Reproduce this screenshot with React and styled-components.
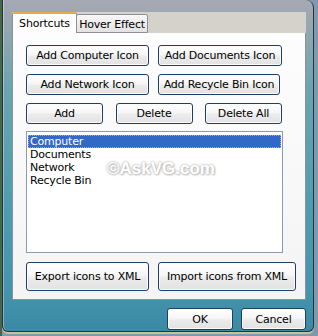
import React from 'react';
import styled, { createGlobalStyle } from 'styled-components';

const GlobalStyle = createGlobalStyle`
	html, body {
		margin: 0;
		padding: 0;
	}
	body {
		width: 318px;
		height: 336px;
		overflow: hidden;
		font-family: "DejaVu Sans", Tahoma, sans-serif;
		font-size: 11px;
		color: #000;
	}
`;

// 바탕화면
const Desktop = styled.div`
	width: 318px;
	height: 336px;
	display: flex;
	align-items: flex-start;
	background: linear-gradient(90deg, #47654a 0, #47654a 2px, #7d9aae 2px);
`;

// Aero 유리 창틀
const Window = styled.div`
	box-sizing: border-box;
	width: 312px;
	height: 332px;
	margin-left: 2px;
	padding: 12px 0 0 9px;
	border: 1px solid #26343e;
	border-top: none;
	border-radius: 0 8px 6px 6px;
	background: linear-gradient(
		to bottom,
		#a5a9b3 0,
		#9ea7af 14px,
		#69a5af 90px,
		#509db0 200px,
		#4494ad 290px,
		#3a8aa5 100%
	);
	box-shadow: inset 1px 0 0 rgba(255, 255, 255, 0.35), 0 2px 0 #c9c19a;
	display: flex;
	flex-direction: column;
`;

const TabStrip = styled.div`
	width: 294px;
	height: 21px;
	display: flex;
	align-items: flex-end;
	background: #d5d2cc;
	margin-bottom: -1px;
	position: relative;
	z-index: 1;
`;

const Tab = styled.div`
	box-sizing: border-box;
	display: flex;
	align-items: center;
	justify-content: center;
	width: ${(p) => p.$w}px;
	height: ${(p) => (p.$active ? 21 : 19)}px;
	margin-left: ${(p) => (p.$active ? 0 : -1)}px;
	border: 1px solid #8e9097;
	border-bottom: ${(p) => (p.$active ? 'none' : '1px solid #8e9097')};
	border-top: ${(p) => (p.$active ? '2px solid #f2a640' : '1px solid #8e9097')};
	background: ${(p) =>
		p.$active ? '#fdfdfd' : 'linear-gradient(#f7f7f7, #e3e3e3)'};
	border-radius: 2px 2px 0 0;
	padding-top: ${(p) => (p.$active ? 0 : 1)}px;
	font-size: 11px;
	letter-spacing: -0.2px;
	white-space: nowrap;
`;

const Panel = styled.div`
	box-sizing: border-box;
	width: 294px;
	height: 268px;
	border: 1px solid #8e9097;
	background: linear-gradient(#fdfdfd, #f4f4f4);
	padding: 12px 0 0 13px;
	display: flex;
	flex-direction: column;
`;

const Button = styled.button`
	box-sizing: border-box;
	width: ${(p) => p.$w}px;
	height: ${(p) => p.$h || 21}px;
	padding: 0;
	border: 1px solid #1f3f66;
	border-radius: 3px;
	background: linear-gradient(#ffffff, #f6f6f6 45%, #ebebeb 55%, #e2e2e2);
	box-shadow: inset 0 0 0 1px #fbfbfb;
	font-family: "DejaVu Sans", Tahoma, sans-serif;
	font-size: 11px;
	letter-spacing: -0.2px;
	color: #000;
	white-space: nowrap;
`;

const ButtonGrid = styled.div`
	display: grid;
	grid-template-columns: 123px 124px;
	column-gap: 9px;
	row-gap: 8px;
`;

const ButtonRow = styled.div`
	display: flex;
	justify-content: space-between;
	width: 256px;
	margin-top: ${(p) => p.$mt}px;
`;

const ListBox = styled.div`
	position: relative;
	box-sizing: border-box;
	width: 257px;
	height: 122px;
	margin-top: 7px;
	padding: 3px 1px;
	border: 1px solid #8a9bb3;
	background: #fff;
	overflow: hidden;
`;

const ListItem = styled.div`
	height: 13px;
	line-height: 13px;
	padding-left: 2px;
	font-size: 11px;
	letter-spacing: -0.2px;
	color: ${(p) => (p.$selected ? '#fff' : '#000')};
	background: ${(p) => (p.$selected ? '#3169c6' : 'transparent')};
	outline: ${(p) => (p.$selected ? '1px dotted #e7a23a' : 'none')};
	outline-offset: -1px;
`;

// 워터마크
const Watermark = styled.div`
	position: absolute;
	left: 80px;
	top: 27px;
	font-family: "Liberation Sans", Arial, sans-serif;
	font-weight: bold;
	font-size: 17px;
	color: #fff;
	text-shadow: 0 0 2px #b8b8b8, 0 0 3px #c8c8c8, 1px 1px 2px #bdbdbd;
`;

const BottomRow = styled.div`
	display: flex;
	gap: 9px;
	margin-top: 9px;
`;

const Footer = styled.div`
	width: 294px;
	display: flex;
	justify-content: flex-end;
	gap: 8px;
	margin-top: 8px;
`;

const items = ['Computer', 'Documents', 'Network', 'Recycle Bin'];

const App = () => {
	return (
		<>
			<GlobalStyle />
			<Desktop>
				<Window>
					<TabStrip>
						<Tab $active $w={65}>
							Shortcuts
						</Tab>
						<Tab $w={72}>Hover Effect</Tab>
					</TabStrip>
					<Panel>
						<ButtonGrid>
							<Button $w={123}>Add Computer Icon</Button>
							<Button $w={124}>Add Documents Icon</Button>
							<Button $w={123}>Add Network Icon</Button>
							<Button $w={122}>Add Recycle Bin Icon</Button>
						</ButtonGrid>
						<ButtonRow $mt={8}>
							<Button $w={77}>Add</Button>
							<Button $w={77}>Delete</Button>
							<Button $w={77}>Delete All</Button>
						</ButtonRow>
						<ListBox>
							{items.map((item, i) => (
								<ListItem key={item} $selected={i === 0}>
									{item}
								</ListItem>
							))}
							<Watermark>©AskVG.com</Watermark>
						</ListBox>
						<BottomRow>
							<Button $w={123} $h={29}>
								Export icons to XML
							</Button>
							<Button $w={138} $h={29}>
								Import icons from XML
							</Button>
						</BottomRow>
					</Panel>
					<Footer>
						<Button $w={66} $h={22}>
							OK
						</Button>
						<Button $w={65} $h={22}>
							Cancel
						</Button>
					</Footer>
				</Window>
			</Desktop>
		</>
	);
};

export default App;
